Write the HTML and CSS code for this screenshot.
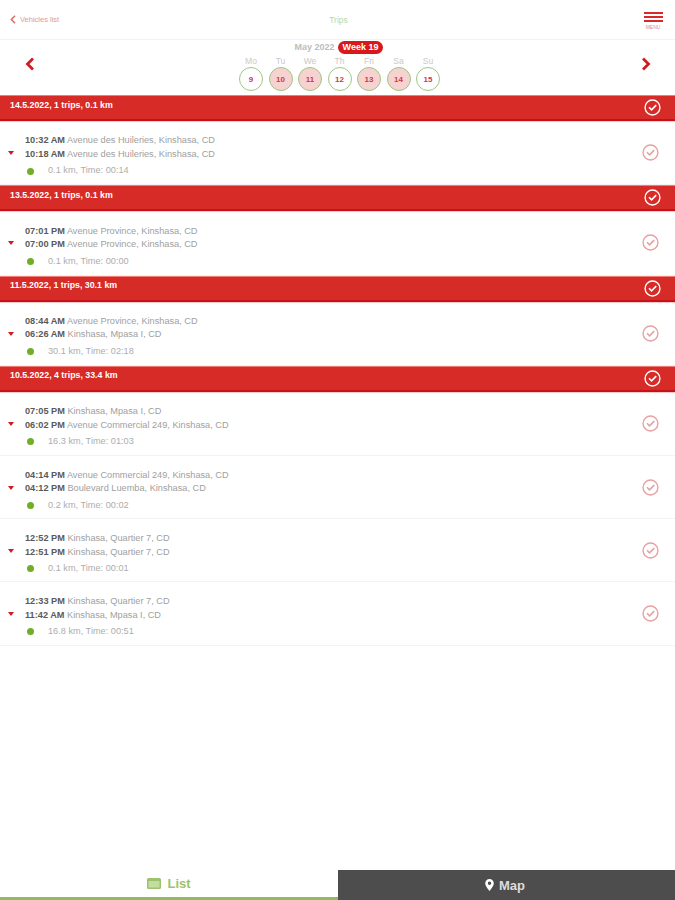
FILE: index.html
```html
<!DOCTYPE html>
<html lang="en">
<head>
    <meta charset="UTF-8">
    <title>Trips</title>
    <link rel="stylesheet" href="styles.css">
</head>
<body>
    <svg class="defs" width="0" height="0">
        <symbol id="check" viewBox="0 0 16 16">
            <circle cx="8" cy="8" r="7" fill="none" stroke="currentColor" stroke-width="1.3"/>
            <path d="M4.700 7.800l2.400 2.400 4.400-4.400" fill="none" stroke="currentColor" stroke-width="1.500"/>
        </symbol>
    </svg>
    <div class="page">
        <header class="topbar">
            <a class="back"><svg width="6" height="9" viewBox="0 0 6 9"><path d="M5 .8L1.400 4.500 5 8.200" fill="none" stroke="#dc6f6c" stroke-width="1.600"/></svg><span>Vehicles list</span></a>
            <div class="title">Trips</div>
            <div class="menu">
                <i></i><i></i><i></i>
                <span>MENU</span>
            </div>
        </header>

        <section class="week">
            <svg class="arrow" width="10" height="14" viewBox="0 0 10 14"><path d="M8 1.500L2.500 7 8 12.500" fill="none" stroke="#d01c1f" stroke-width="2.800"/></svg>
            <div class="week-mid">
                <div class="week-head"><span class="month">May 2022</span><span class="weeknum">Week 19</span></div>
                <div class="days">
                    <div class="day"><span>Mo</span><b>9</b></div>
                    <div class="day on"><span>Tu</span><b>10</b></div>
                    <div class="day on"><span>We</span><b>11</b></div>
                    <div class="day"><span>Th</span><b>12</b></div>
                    <div class="day on"><span>Fri</span><b>13</b></div>
                    <div class="day on"><span>Sa</span><b>14</b></div>
                    <div class="day"><span>Su</span><b>15</b></div>
                </div>
            </div>
            <svg class="arrow" width="10" height="14" viewBox="0 0 10 14"><path d="M2 1.500L7.500 7 2 12.500" fill="none" stroke="#d01c1f" stroke-width="2.800"/></svg>
        </section>

        <div class="daybar"><span>14.5.2022, 1 trips, 0.1 km</span><svg class="tick"><use href="#check"/></svg></div>
        <div class="trip">
            <i class="mark"></i>
            <div class="trip-text">
                <p><b>10:32 AM</b> Avenue des Huileries, Kinshasa, CD</p>
                <p><b>10:18 AM</b> Avenue des Huileries, Kinshasa, CD</p>
                <p class="info"><i class="dot"></i>0.1 km, Time: 00:14</p>
            </div>
            <svg class="tick-row"><use href="#check"/></svg>
        </div>

        <div class="daybar"><span>13.5.2022, 1 trips, 0.1 km</span><svg class="tick"><use href="#check"/></svg></div>
        <div class="trip">
            <i class="mark"></i>
            <div class="trip-text">
                <p><b>07:01 PM</b> Avenue Province, Kinshasa, CD</p>
                <p><b>07:00 PM</b> Avenue Province, Kinshasa, CD</p>
                <p class="info"><i class="dot"></i>0.1 km, Time: 00:00</p>
            </div>
            <svg class="tick-row"><use href="#check"/></svg>
        </div>

        <div class="daybar"><span>11.5.2022, 1 trips, 30.1 km</span><svg class="tick"><use href="#check"/></svg></div>
        <div class="trip">
            <i class="mark"></i>
            <div class="trip-text">
                <p><b>08:44 AM</b> Avenue Province, Kinshasa, CD</p>
                <p><b>06:26 AM</b> Kinshasa, Mpasa I, CD</p>
                <p class="info"><i class="dot"></i>30.1 km, Time: 02:18</p>
            </div>
            <svg class="tick-row"><use href="#check"/></svg>
        </div>

        <div class="daybar"><span>10.5.2022, 4 trips, 33.4 km</span><svg class="tick"><use href="#check"/></svg></div>
        <div class="trip">
            <i class="mark"></i>
            <div class="trip-text">
                <p><b>07:05 PM</b> Kinshasa, Mpasa I, CD</p>
                <p><b>06:02 PM</b> Avenue Commercial 249, Kinshasa, CD</p>
                <p class="info"><i class="dot"></i>16.3 km, Time: 01:03</p>
            </div>
            <svg class="tick-row"><use href="#check"/></svg>
        </div>
        <div class="trip">
            <i class="mark"></i>
            <div class="trip-text">
                <p><b>04:14 PM</b> Avenue Commercial 249, Kinshasa, CD</p>
                <p><b>04:12 PM</b> Boulevard Luemba, Kinshasa, CD</p>
                <p class="info"><i class="dot"></i>0.2 km, Time: 00:02</p>
            </div>
            <svg class="tick-row"><use href="#check"/></svg>
        </div>
        <div class="trip">
            <i class="mark"></i>
            <div class="trip-text">
                <p><b>12:52 PM</b> Kinshasa, Quartier 7, CD</p>
                <p><b>12:51 PM</b> Kinshasa, Quartier 7, CD</p>
                <p class="info"><i class="dot"></i>0.1 km, Time: 00:01</p>
            </div>
            <svg class="tick-row"><use href="#check"/></svg>
        </div>
        <div class="trip">
            <i class="mark"></i>
            <div class="trip-text">
                <p><b>12:33 PM</b> Kinshasa, Quartier 7, CD</p>
                <p><b>11:42 AM</b> Kinshasa, Mpasa I, CD</p>
                <p class="info"><i class="dot"></i>16.8 km, Time: 00:51</p>
            </div>
            <svg class="tick-row"><use href="#check"/></svg>
        </div>

        <nav class="tabs">
            <div class="tab tab-list">
                <svg width="14" height="11" viewBox="0 0 14 11"><rect width="14" height="11" rx="1.500" fill="#9cc26c"/><rect x="1.500" y="3" width="11" height="6.500" fill="#c3dca3"/></svg>
                <span>List</span>
            </div>
            <div class="tab tab-map">
                <svg width="9" height="12" viewBox="0 0 9 12"><path fill-rule="evenodd" d="M4.500 0a4.300 4.300 0 0 1 4.300 4.300C8.800 7.200 4.500 12 4.500 12S.2 7.200.2 4.300A4.300 4.300 0 0 1 4.500 0zm0 2.600a1.700 1.700 0 1 0 0 3.400 1.700 1.700 0 0 0 0-3.400z" fill="#fff"/></svg>
                <span>Map</span>
            </div>
        </nav>
    </div>
</body>
</html>
```

FILE: styles.css
```css
* { margin:0; padding:0; box-sizing:border-box; font-family:"Liberation Sans", Arial, sans-serif }
body { background-color:#fff; }
.defs { display:block; height:0; }
.page {
    width:675px;
    height:900px;
    display:flex;
    flex-direction:column;
}
.topbar {
    height:40px;
    flex:none;
    display:grid;
    grid-template-columns:1fr 1fr 1fr;
    align-items:center;
    padding:0 12px 0 10px;
    border-bottom:1px solid #f3f3f3;
}
.back {
    display:flex;
    align-items:center;
    gap:4px;
    font-size:7.500px;
    color:#dc9a98;
}
.title {
    text-align:center;
    font-size:8.500px;
    color:#bcd7a3;
    padding-left:4px;
}
.menu {
    justify-self:end;
    width:20px;
    display:flex;
    flex-direction:column;
    align-items:center;
    gap:2px;
    padding-top:2px;
}
.menu i {
    display:block;
    width:19px;
    height:2px;
    background-color:#d8282a;
}
.menu span {
    font-size:5px;
    line-height:6px;
    color:#e08a88;
}
.week {
    height:55px;
    flex:none;
    display:flex;
    justify-content:space-between;
    align-items:center;
    padding:0 24px 0 25px;
}
.arrow { margin-bottom:7px; }
.week-mid {
    align-self:flex-start;
    margin-left:3px;
    display:flex;
    flex-direction:column;
    align-items:center;
}
.week-head {
    display:flex;
    align-items:center;
    gap:3px;
    margin-left:-1px;
    height:14px;
    margin-bottom:2px;
}
.month {
    font-size:9px;
    font-weight:bold;
    color:#bdbdbd;
}
.weeknum {
    font-size:9px;
    font-weight:bold;
    color:#fff;
    background-color:#d8191c;
    border-radius:7px;
    padding:0 5px;
    line-height:13px;
}
.days {
    display:flex;
    gap:5.500px;
}
.day {
    width:24px;
    display:flex;
    flex-direction:column;
    align-items:center;
}
.day span {
    font-size:8.500px;
    line-height:11px;
    color:#c9c9c9;
}
.day b {
    width:24px;
    height:24px;
    border:1.500px solid #9fc680;
    border-radius:50%;
    display:flex;
    justify-content:center;
    align-items:center;
    font-size:8px;
    color:#cf3a3f;
}
.day.on b { background-color:#f6d3d1; }
.daybar {
    height:26px;
    flex:none;
    display:flex;
    justify-content:space-between;
    align-items:center;
    padding:0 14px 0 10px;
    background-color:#d62b26;
    border-top:1px solid #f07c78;
    border-bottom:2px solid #c8101a;
    box-shadow:0 1px 0 #f8c9c6;
}
.daybar span {
    font-size:8.800px;
    font-weight:bold;
    color:#fff;
    margin-top:-6px;
}
.tick { width:17px; height:17px; color:#fff; }
.tick-row { width:17px; height:17px; color:#e9a0a0; flex:none; }
.trip {
    height:63.200px;
    flex:none;
    display:flex;
    align-items:center;
    padding:0 16px 0 8px;
    border-bottom:1px solid #f3f3f3;
}
.daybar + .trip { height:64.250px; }
.mark {
    width:0;
    height:0;
    flex:none;
    border-left:3.500px solid transparent;
    border-right:3.500px solid transparent;
    border-top:4px solid #d01c1f;
    margin-right:10px;
    margin-top:1px;
}
.trip-text {
    flex:1;
    font-size:9.200px;
    line-height:13.500px;
    color:#a0a0a0;
    margin-top:7px;
    padding-left:1px;
}
.trip-text b { color:#5a5a5a; }
.info {
    display:flex;
    align-items:center;
    margin-top:3px;
    color:#adadad;
}
.dot {
    width:7px;
    height:7px;
    border-radius:50%;
    background-color:#72ad28;
    margin:0 14px 0 2px;
}
.tabs {
    margin-top:auto;
    height:30px;
    flex:none;
    display:grid;
    grid-template-columns:338px 1fr;
}
.tab {
    display:flex;
    justify-content:center;
    align-items:center;
    gap:6px;
    font-family:Lato, sans-serif;
    font-size:13px;
    font-weight:bold;
}
.tab-list {
    color:#9cc26c;
    border-bottom:3px solid #8fbc5e;
}
.tab-map {
    color:#ddd;
    background-color:#4d4d4d;
    gap:5px;
    padding-right:3px;
}
```
